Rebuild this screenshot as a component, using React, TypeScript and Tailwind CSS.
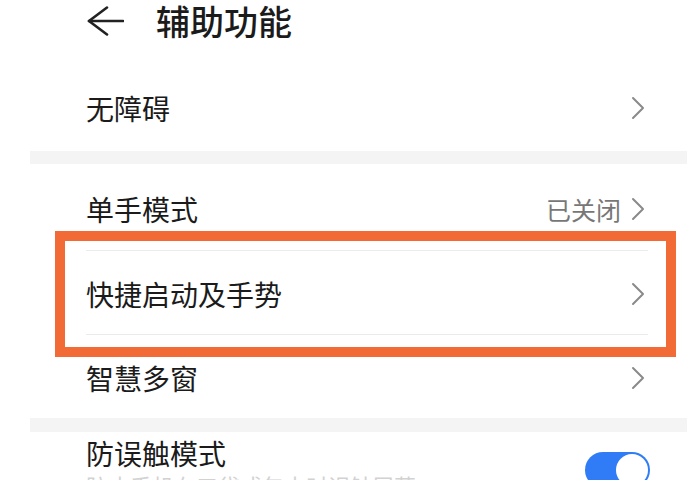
import type { ReactNode } from 'react'

function Chevron() {
  return (
    <svg width="14" height="24" viewBox="0 0 14 24" fill="none" className="shrink-0">
      <polyline points="2,2 12,12 2,22" stroke="#8a8a8a" strokeWidth="2" strokeLinecap="round" strokeLinejoin="round" />
    </svg>
  )
}

function Row({ label, right, height }: { label: string; right?: ReactNode; height: string }) {
  return (
    <div className={`flex items-center justify-between pl-[86px] pr-[42px] pt-[3px] ${height}`}>
      <span className="text-[28px] leading-[32px] text-[#1b1b1b]">{label}</span>
      <div className="flex items-center gap-[10px]">
        {right}
        <Chevron />
      </div>
    </div>
  )
}

export default function App() {
  return (
    <div className="w-[687px] h-[490px] bg-white overflow-hidden font-['Noto_Sans_CJK_SC',sans-serif]">
      <div className="relative h-[480px] overflow-hidden">
        {/* Header */}
        <header className="h-[41px] flex items-center pl-[87px]">
          <svg width="37" height="30" viewBox="0 0 37 30" fill="none" className="shrink-0">
            <polyline points="20,1.5 2,15 20,28.5" stroke="#222" strokeWidth="2.6" strokeLinecap="round" strokeLinejoin="round" />
            <line x1="2" y1="15" x2="36" y2="15" stroke="#222" strokeWidth="2.6" strokeLinecap="round" />
          </svg>
          <h1 className="ml-[32px] text-[34px] leading-[40px] font-medium text-[#1b1b1b]">辅助功能</h1>
        </header>

        {/* 无障碍 */}
        <div className="h-[110px] pt-[24px] flex items-center justify-between pl-[86px] pr-[42px]">
          <span className="text-[28px] leading-[32px] text-[#1b1b1b]">无障碍</span>
          <Chevron />
        </div>

        <div className="ml-[30px] h-[13px] bg-[#f4f4f4]" />

        <Row
          label="单手模式"
          height="h-[86px]"
          right={<span className="text-[25px] leading-[30px] text-[#777]">已关闭</span>}
        />
        <div className="ml-[86px] mr-[39px] h-px bg-[#ebebeb]" />
        <Row label="快捷启动及手势" height="h-[83px]" />
        <div className="ml-[86px] mr-[39px] h-px bg-[#ebebeb]" />
        <Row label="智慧多窗" height="h-[83px]" />

        <div className="ml-[30px] h-[14px] bg-[#f4f4f4]" />

        {/* 防误触模式 */}
        <div className="flex items-start justify-between pl-[86px] pr-[37px] pt-[5px]">
          <div className="flex flex-col">
            <span className="text-[28px] leading-[32px] text-[#1b1b1b]">防误触模式</span>
            <span className="mt-[3px] text-[22px] leading-[26px] text-[#d2d2d2] whitespace-nowrap">
              防止手机在口袋或包中时误触屏幕
            </span>
          </div>
          <div className="mt-[15px] w-[65px] h-[36px] rounded-full bg-[#2f7cf6] flex items-center justify-end pr-[2px]">
            <div className="w-[32px] h-[32px] rounded-full bg-white" />
          </div>
        </div>

        {/* highlight box */}
        <div className="absolute left-[55px] top-[231px] w-[621px] h-[126px] border-[10px] border-[#f26a35]" />
      </div>
    </div>
  )
}
